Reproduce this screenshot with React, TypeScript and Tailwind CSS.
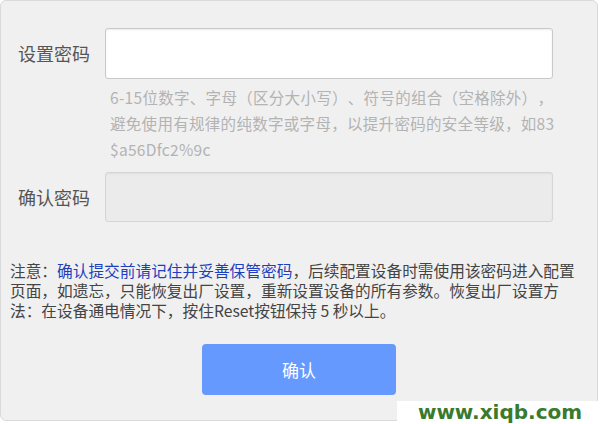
export default function App() {
  return (
    <div
      className="relative w-[600px] h-[424px] bg-white overflow-hidden [text-spacing-trim:space-all]"
      style={{ fontFamily: '"Noto Sans CJK SC", "Noto Sans", sans-serif' }}
    >
      <div className="w-[598px] h-[421px] bg-[#f0f0f0] border border-[#dadada] rounded-[6px] flex flex-col">
        {/* set password */}
        <div className="flex items-center pl-[17px] pt-[27px]">
          <span className="w-[87px] text-[18px] text-[#555]">设置密码</span>
          <div className="w-[448px] h-[51px] bg-white border border-[#c9c9c9] rounded-[3px] shadow-[inset_0_1px_2px_rgba(0,0,0,0.08)]" />
        </div>
        <p className="ml-[109px] mt-[5px] text-[15.5px] leading-[26px] text-[#b3b3b3] whitespace-nowrap tracking-[0.3px]">
          6-15位数字、字母（区分大小写）、符号的组合（空格除外），
          <br />
          避免使用有规律的纯数字或字母，以提升密码的安全等级，如83
          <br />
          $a56Dfc2%9c
        </p>

        {/* confirm password */}
        <div className="flex items-center pl-[17px] mt-[10px]">
          <span className="w-[87px] text-[18px] text-[#555]">确认密码</span>
          <div className="w-[448px] h-[50px] bg-[#ebebeb] border border-[#d5d5d5] rounded-[3px] shadow-[inset_0_1px_2px_rgba(0,0,0,0.05)]" />
        </div>

        {/* note */}
        <p className="ml-[9px] mt-[39px] text-[15.7px] leading-[20px] text-[#444] whitespace-nowrap">
          注意：<span className="text-[#1d3fbf]">确认提交前请记住并妥善保管密码</span>，后续配置设备时需使用该密码进入配置
          <br />
          页面，如遗忘，只能恢复出厂设置，重新设置设备的所有参数。恢复出厂设置方
          <br />
          法：在设备通电情况下，按住Reset按钮保持 5 秒以上。
        </p>

        <div className="flex justify-center mt-[23px]">
          <button className="w-[194px] h-[51px] bg-[#6699fe] rounded-[4px] text-white text-[17px]">
            确认
          </button>
        </div>
      </div>

      {/* watermark */}
      <div className="absolute left-[397px] top-[401px] w-[203px] h-[23px] bg-white flex items-start justify-center pl-[3px]">
        <span
          className="text-[20px] leading-[20px] font-bold text-[#3a7a2c] mt-[1px]"
          style={{ fontFamily: '"DejaVu Sans", sans-serif' }}
        >
          www.xiqb.com
        </span>
      </div>
    </div>
  )
}
